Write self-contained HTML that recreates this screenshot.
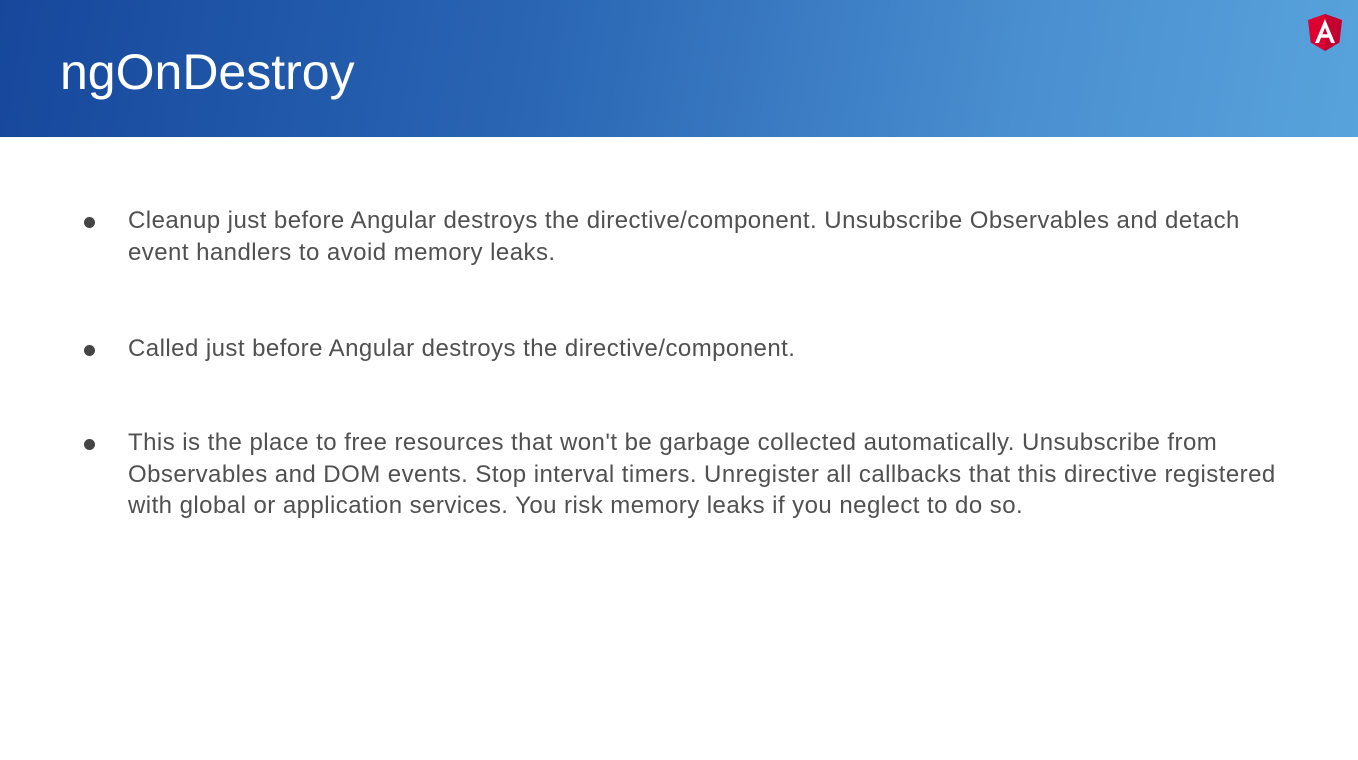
<!DOCTYPE html>
<html><head><meta charset="utf-8"><style>
body{margin:0;width:1358px;height:760px;background:#fff;overflow:hidden;font-family:"Liberation Sans",sans-serif;}
.hdr{position:absolute;left:0;top:0;width:1358px;height:137px;background:linear-gradient(100deg,#16479c 0%,#2a66b4 40%,#4a8fd0 75%,#58a3dc 100%);}
.hdr h1{position:absolute;left:60px;top:42px;margin:0;font-weight:normal;font-size:50px;color:#fff;line-height:60px;}
.logo{position:absolute;left:1308px;top:14px;}
ul{position:absolute;left:0;top:0;margin:0;padding:0;list-style:none;}
li{position:absolute;left:128px;width:1200px;font-size:24px;line-height:31.5px;color:#505050;letter-spacing:0.45px;white-space:nowrap;}
li:before{content:"";position:absolute;left:-44px;top:12px;width:11px;height:11px;border-radius:50%;background:#444;}
</style></head><body>
<div class="hdr"><h1>ngOnDestroy</h1>
<svg class="logo" width="34" height="37" viewBox="0 0 34 37"><path d="M17 0L0 6l2.6 22.5L17 37l14.4-8.5L34 6z" fill="#dd0031"/><path d="M17 0v37l14.4-8.5L34 6z" fill="#c3002f"/><path d="M17 5L7 29h4l2-5.2h8l2 5.2h4zM14.4 20.2l2.6-6.6 2.6 6.6z" fill="#fff"/></svg>
</div>
<ul>
<li style="top:205px">Cleanup just before Angular destroys the directive/component. Unsubscribe Observables and detach<br>event handlers to avoid memory leaks.</li>
<li style="top:333px">Called just before Angular destroys the directive/component.</li>
<li style="top:427px">This is the place to free resources that won't be garbage collected automatically. Unsubscribe from<br>Observables and DOM events. Stop interval timers. Unregister all callbacks that this directive registered<br>with global or application services. You risk memory leaks if you neglect to do so.</li>
</ul>
</body></html>
